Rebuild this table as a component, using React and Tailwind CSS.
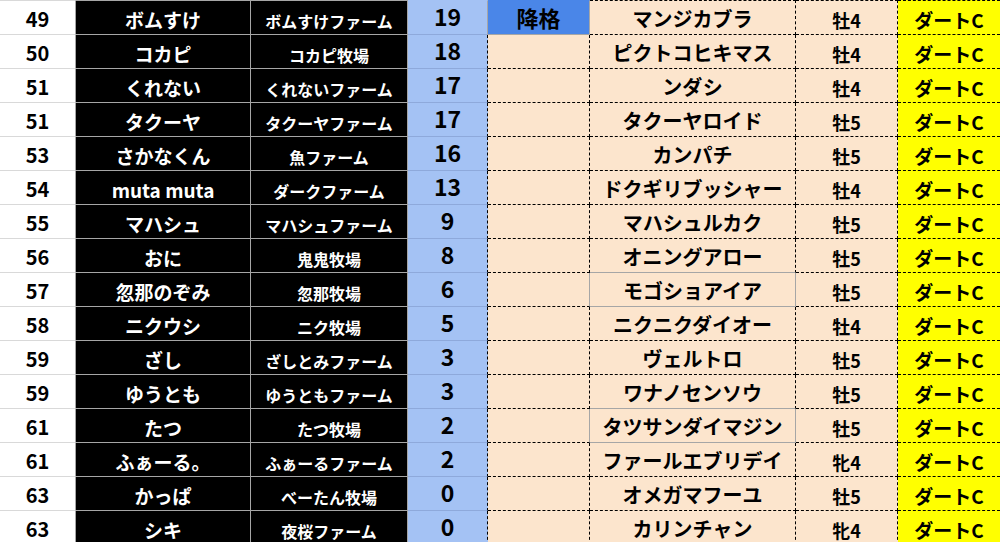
const rows = [
  ['49', 'ボムすけ', 'ボムすけファーム', '19', '降格', 'マンジカブラ', '牡4'],
  ['50', 'コカピ', 'コカピ牧場', '18', '', 'ピクトコヒキマス', '牡4'],
  ['51', 'くれない', 'くれないファーム', '17', '', 'ンダシ', '牡4'],
  ['51', 'タクーヤ', 'タクーヤファーム', '17', '', 'タクーヤロイド', '牡5'],
  ['53', 'さかなくん', '魚ファーム', '16', '', 'カンパチ', '牡5'],
  ['54', 'muta muta', 'ダークファーム', '13', '', 'ドクギリブッシャー', '牡4'],
  ['55', 'マハシュ', 'マハシュファーム', '9', '', 'マハシュルカク', '牡5'],
  ['56', 'おに', '鬼鬼牧場', '8', '', 'オニングアロー', '牡5'],
  ['57', '忽那のぞみ', '忽那牧場', '6', '', 'モゴショアイア', '牡5'],
  ['58', 'ニクウシ', 'ニク牧場', '5', '', 'ニクニクダイオー', '牡4'],
  ['59', 'ざし', 'ざしとみファーム', '3', '', 'ヴェルトロ', '牡5'],
  ['59', 'ゆうとも', 'ゆうともファーム', '3', '', 'ワナノセンソウ', '牡5'],
  ['61', 'たつ', 'たつ牧場', '2', '', 'タツサンダイマジン', '牡5'],
  ['61', 'ふぁーる。', 'ふぁーるファーム', '2', '', 'ファールエブリデイ', '牝4'],
  ['63', 'かっぱ', 'べーたん牧場', '0', '', 'オメガマフーユ', '牡5'],
  ['63', 'シキ', '夜桜ファーム', '0', '', 'カリンチャン', '牝4'],
]

// cells with a plain grey box in the horse column
const boxed = [8, 12]

function Row({ r, i }) {
  const first = i === 0
  const h = first ? 'h-[35px] border-t' : 'h-[34px]'
  const cell = 'flex items-end justify-center leading-none whitespace-nowrap border-b border-r'

  const eCls = first
    ? 'bg-[#4a86e8] border-[#a6a6a6] border-t-[#4a86e8]'
    : boxed.includes(i)
      ? 'bg-[#fce5cd] border-b-black border-r-[#a6a6a6] [border-bottom-style:dashed]'
      : 'bg-[#fce5cd] border-dashed border-black'

  const fCls = boxed.includes(i)
    ? 'border-[#a6a6a6]'
    : boxed.includes(i + 1)
      ? 'border-b-[#a6a6a6] border-r-black border-t-black [border-right-style:dashed] [border-top-style:dashed]'
      : 'border-dashed border-black'

  return (
    <>
      <div className={`${cell} ${h} pb-[5px] bg-white text-black text-[20px] border-b-[#d9d9d9] border-r-[#a6a6a6] border-t-[#d9d9d9]`}>
        {r[0]}
      </div>
      <div className={`${cell} ${h} pb-[5px] bg-black text-white text-[19px] border-[#a6a6a6]`}>{r[1]}</div>
      <div className={`${cell} ${h} pb-[5px] bg-black text-white text-[16px] border-[#a6a6a6]`}>{r[2]}</div>
      <div
        className={`${cell} ${h} pb-[6px] bg-[#a4c2f4] text-black text-[23px] border-b-[#8ea9db] border-t-[#a4c2f4] ${
          first ? 'border-r-[#a6a6a6]' : 'border-r-black [border-right-style:dashed]'
        }`}
      >
        {r[3]}
      </div>
      <div className={`${cell} ${h} pb-[6px] ${eCls} text-black text-[22px]`}>{r[4]}</div>
      <div className={`${cell} ${h} pb-[5px] ${fCls} bg-[#fce5cd] text-black text-[20px]`}>{r[5]}</div>
      <div className={`${cell} ${h} pb-[5px] bg-[#fce5cd] border-dashed border-black text-black text-[18px]`}>{r[6]}</div>
      <div className={`${cell} ${h} pb-[5px] bg-[#ffff00] border-dashed border-black border-r-0 text-black text-[19px]`}>
        ダートC
      </div>
    </>
  )
}

export default function App() {
  return (
    <div
      className="w-[1000px] h-[542px] overflow-hidden bg-white font-bold"
      style={{ fontFamily: '"Noto Sans CJK JP", "Noto Sans", sans-serif' }}
    >
      <div className="grid grid-cols-[76px_175px_157px_80px_102px_206px_102px_102px]">
        {rows.map((r, i) => (
          <Row key={i} r={r} i={i} />
        ))}
      </div>
    </div>
  )
}
